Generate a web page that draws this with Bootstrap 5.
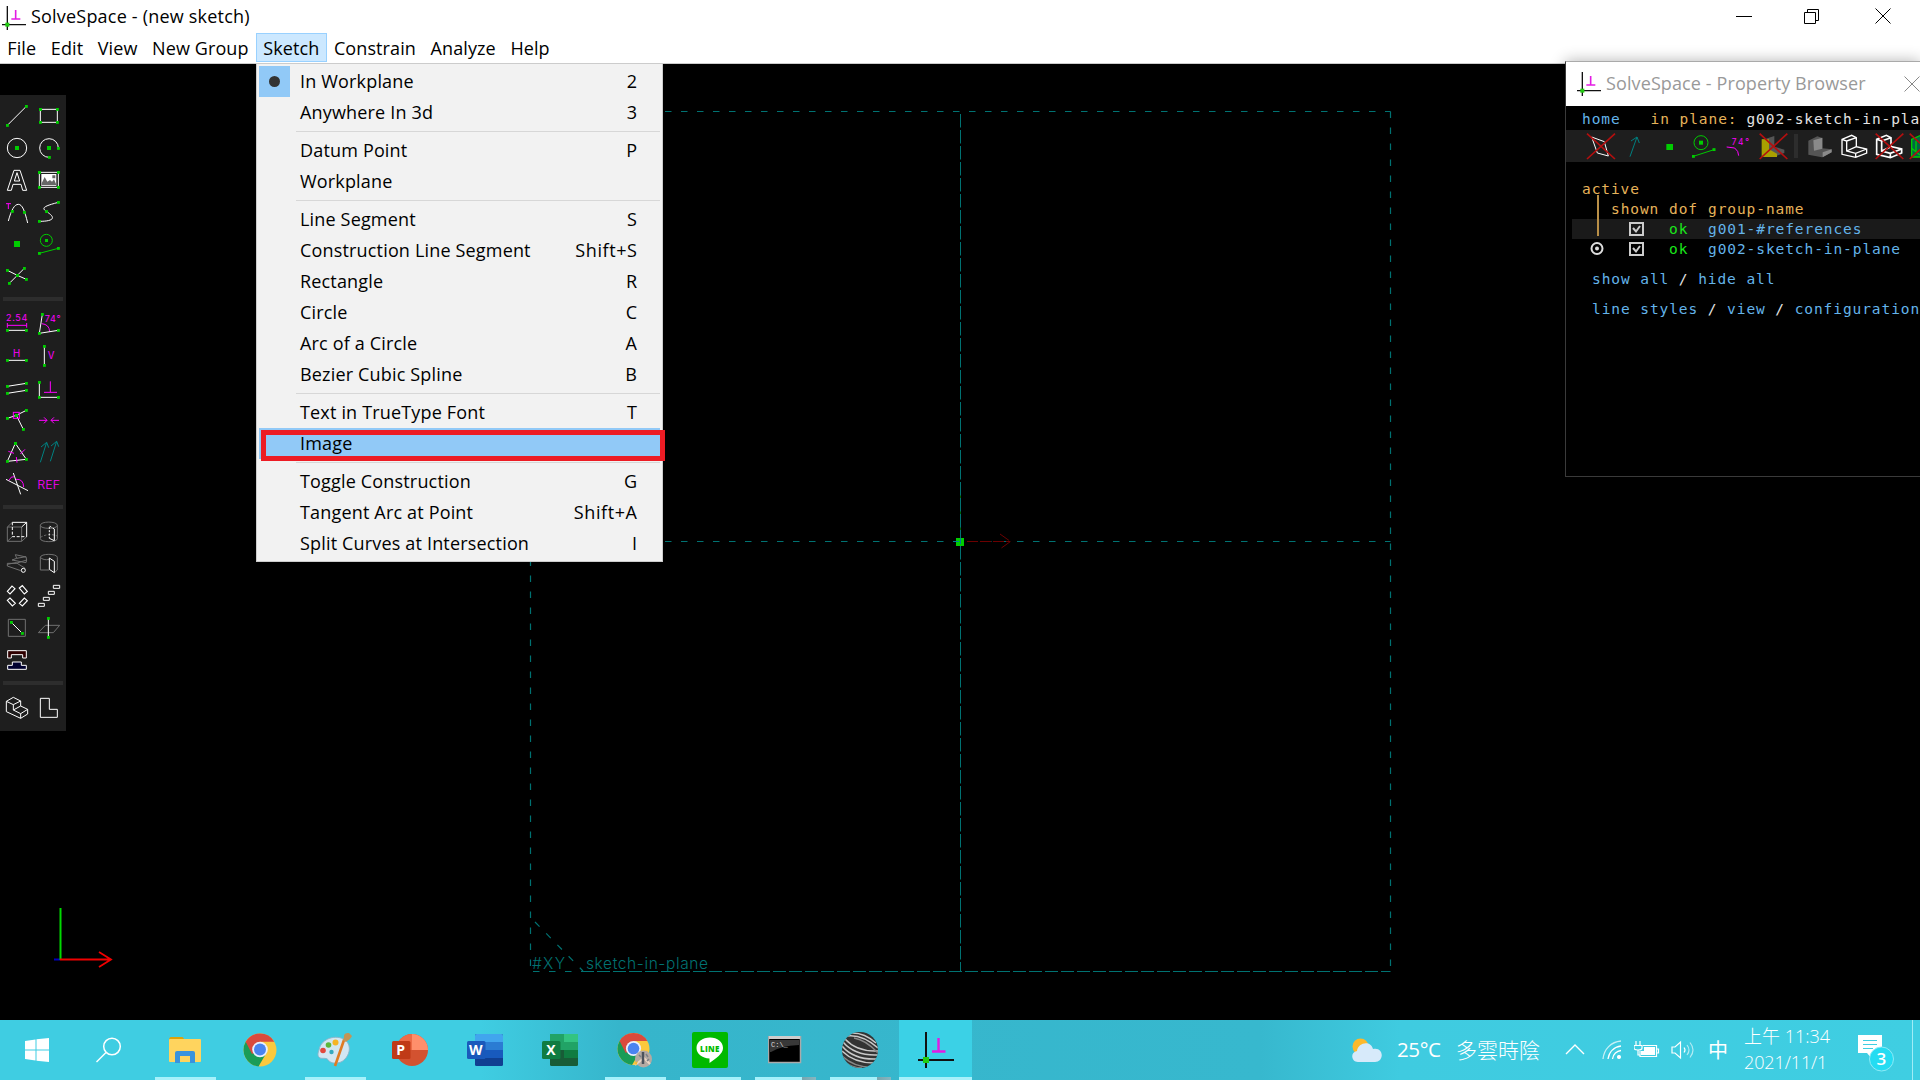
<!DOCTYPE html>
<html lang="zh-Hant">
<head>
<meta charset="utf-8">
<title>SolveSpace - (new sketch)</title>
<link href="https://cdn.jsdelivr.net/npm/bootstrap@5.3.0/dist/css/bootstrap.min.css" rel="stylesheet">
<style>
  body { width: 1920px; height: 1080px; font-family: "Open Sans", "Noto Sans CJK TC", sans-serif; font-size: 18px; color: #000; background: #000; line-height: 1; }
  svg { display: block; flex: none; }
  .title-row { height: 32px; padding-left: 2px; }
  .title-row .caption { letter-spacing: .2px; margin-left: 5px; }
  .pb-title .caption { letter-spacing: .11px; margin: 0 0 2px 5px; }
  .menu-row { height: 32px; border-bottom: 1px solid #ccc; }
  .menu-row span { height: 29px; line-height: 28px; padding: 0 6.3px; letter-spacing: .1px; border: 1px solid transparent; white-space: nowrap; }
  .menu-row .opened { background: #cce8ff; border-color: #99d1ff; }
  .win-controls { gap: 55px; padding-right: 29px; }
  .win-controls svg:first-child { margin-right: -3px; }
  .stage { height: 956px; }
  .drawing { left: 0; top: 0; }
  .toolbox { width: 66px; height: 636px; top: 31px; padding: 5px 1px 0; background: #1e1e1e; z-index: 1; }
  .toolbox svg { width: 32px; height: 32px; }
  .toolbox .rule { width: 60px; height: 4px; margin: 5px 2px 7px; background: #2d2d2d; }
  .w { stroke: #fff; } .g { stroke: #00cc00; } .gr { stroke: #707070; } .m { stroke: #f0f; } .t { stroke: #008080; }
  .toolbox svg, .pb-tools svg { fill: none; stroke-width: 3; }
  .toolbox text, .pb-tools text { fill: #f0f; font-family: Inter, sans-serif; }
  .dots { marker-start: url(#pt); marker-mid: url(#pt); marker-end: url(#pt); }
  .drop { left: 256px; top: 63px; width: 407px; height: 499px; padding: 2px; background: #f2f2f2; border: 1px solid #ccc; z-index: 3; }
  .drop .entry { height: 31px; line-height: 31px; padding-right: 23px; white-space: nowrap; letter-spacing: .17px; }
  .drop .entry .ms-auto { letter-spacing: .6px; margin-right: -.6px; }
  .drop .tick { width: 31px; height: 31px; margin-right: 10px; }
  .drop .tick.on { background: #91c9f7; }
  .drop .tick i { width: 11px; height: 11px; border-radius: 50%; background: #333; }
  .drop .split { height: 1px; margin: 3px 0 3px 37px; background: #d7d7d7; }
  .drop .hot { background: #91c9f7; }
  .frame-red { left: 261px; top: 430px; width: 404px; height: 31px; border: 5px solid #ed1c24; z-index: 4; }
  .prop { left: 1565px; top: 61px; width: 355px; height: 416px; border: 1px solid #aaa; border-width: 1px 0 1px 1px; border-left-color: #3a3a3a; border-bottom-color: #3a3a3a; background: #000; z-index: 2; overflow: hidden; box-shadow: 0 0 14px rgba(0,0,0,.3); }
  .pb-title { height: 44px; background: #fff; color: #999; padding-left: 11px; }
  .mono { font-family: "DejaVu Sans Mono", monospace; font-size: 14.5px; letter-spacing: .92px; white-space: pre; line-height: 20px; }
  .b { color: #64b4ea; } .o { color: #e6b35a; } .k { color: #1ae61a; } .c { color: #e4e4e4; }
  .pb-head { height: 24px; line-height: 26px; padding-left: 16px; }
  .pb-tools { height: 32px; background: #1e1e1e; padding-left: 18px; }
  .pb-tools svg { width: 34.33px; height: 32px; }
  .pb-tools .bar { width: 4px; height: 24px; margin: 4px 5px 0 4px; background: #2d2d2d; flex: none; }
  .x { stroke: #b40f0f; stroke-width: 5; }
  .grid-row { height: 20px; margin-left: 6px; }
  .grid-row.alt { background: #1a1a1a; }
  .c-act { width: 39px; padding-left: 18px; } .c-shown { width: 58px; padding-left: 18px; } .c-dof { width: 39px; }
  .c-act svg, .c-shown svg { margin-top: 3px; }
  .ln-active { padding: 17px 0 0 16px; } .ln-cols { padding-left: 45px; } .ln-links { padding: 10px 0 0 26px; }
  .stem { left: 1597px; top: 195px; width: 1.5px; height: 41px; background: #b98f47; z-index: 3; }
  .taskbar { height: 60px; color: #fff; background: linear-gradient(90deg, #3fcde2 0, #3fcde2 480px, #36b5cb 620px, #37b8ce 1260px, #3fcbe0 1400px, #3fcee2 100%); }
  .tb { width: 75px; height: 60px; position: relative; flex: none; display: flex; align-items: center; justify-content: center; }
  .tb.first { width: 73px; } .tb.find { width: 74px; } .tb.find svg { margin-right: 3px; }
  .tb.run { background: linear-gradient(#a6f1fb, #a6f1fb) 8px 57px / 61px 3px no-repeat; }
  .tb.stack { background: linear-gradient(90deg, #a6f1fb 47px, #78a5ae 47px, #86b7c1 100%) 8px 57px / 61px 3px no-repeat; }
  .tb.cur { width: 73px; margin-left: 2px; background: linear-gradient(#a6f1fb, #a6f1fb) 0 57px / 100% 3px no-repeat #3bd1e6; }
  .tray { margin-left: auto; width: 569px; }
  .tray .temp { width: 59px; font-size: 20.5px; letter-spacing: -.4px; margin: -2px 0 0 14px; }
  .tray .sky { width: 109px; margin-top: -2px; font: 300 21px "Noto Sans CJK TC", sans-serif; }
  .tray .zh { font: 20px "Noto Sans CJK TC", sans-serif; width: 36px; margin-top: -2px; }
  .clock { font: 300 18px/26px "Open Sans", "Noto Sans CJK TC", sans-serif; width: 114px; margin-top: -2px; white-space: nowrap; }
  .clock .day { letter-spacing: -.1px; }
  .note { margin-top: 8px; }
  .edge { width: 1px; height: 60px; background: #a0ecf6; }
</style>
<script src="https://cdn.jsdelivr.net/npm/bootstrap@5.3.0/dist/js/bootstrap.bundle.min.js"></script>
</head>
<body class="position-relative overflow-hidden d-flex flex-column">
<svg width="0" height="0" class="position-absolute">
  <defs>
    <marker id="pt" markerUnits="userSpaceOnUse" markerWidth="10" markerHeight="10" refX="5" refY="5"><rect x=".5" y=".5" width="9" height="9" fill="#00cc00"/></marker>
    <symbol id="logo" viewBox="0 0 36 36"><path d="M8 0V36M0 28H36" stroke="#111" stroke-width="2"/><path d="M20.500 6V19M14 19.500H27.500" stroke="#e31be3" stroke-width="2.400"/><rect x="5" y="25" width="6" height="6" fill="#22cc11"/></symbol>
    <symbol id="chrome" viewBox="0 0 34 34"><circle cx="17" cy="17" r="16.500" fill="#fbc93d"/><path d="M17 17L2.700 8.800A16.500 16.500 0 0 0 15.500 33.400L24 19Z" fill="#1a9c57"/><path d="M17 17L9 21L2.700 8.800A16.500 16.500 0 0 1 31.300 8.800H17Z" fill="#da4a3d"/><circle cx="17" cy="16.500" r="7.800" fill="#eaf0ff"/><circle cx="17" cy="16.500" r="6" fill="#4a84f0"/></symbol>
  </defs>
</svg>

<header class="bg-white">
  <div class="title-row d-flex align-items-center">
    <svg width="24" height="24" class="mt-1"><use href="#logo"/></svg>
    <span class="caption">SolveSpace - (new sketch)</span>
    <div class="win-controls d-flex ms-auto">
      <svg width="16" height="16" stroke="#000"><path d="M0 8.500H16"/></svg>
      <svg width="16" height="16" stroke="#000" fill="none"><path d="M.5 4.500H11.500V15.500H.5ZM3.500 4.500V1.500H14.500V12.500H11.500"/></svg>
      <svg width="16" height="16" stroke="#000"><path d="M.5 .5L15.500 15.500M15.500 .5L.5 15.500"/></svg>
    </div>
  </div>
  <nav class="menu-row d-flex align-items-center">
    <span>File</span><span>Edit</span><span>View</span><span>New Group</span><span class="opened">Sketch</span><span>Constrain</span><span>Analyze</span><span>Help</span>
  </nav>
</header>

<main class="stage position-relative">
  <svg class="drawing position-absolute" width="1920" height="956" viewBox="0 64 1920 956" fill="none">
    <g stroke="#007272" stroke-width="1.200">
      <path d="M530.500 111.500V971.500" stroke-dasharray="6.500 9.500"/>
      <path d="M1390.500 111.500V971.500" stroke-dasharray="6.500 9.500"/>
      <path d="M537 111.500H1390.500" stroke-dasharray="6.500 9.500"/>
      <path d="M533 971.500H581" stroke-dasharray="6.500 9.500"/>
      <path d="M581 971.500H1390.500" stroke-dasharray="13 3"/>
      <path d="M537 541.500H1390.500" stroke-dasharray="6.500 9.500"/>
      <path d="M535 922L583 971" stroke-dasharray="6.500 9.500"/>
    </g>
    <path d="M960.500 541V491" stroke="#006000"/>
    <path d="M960.500 114V971.500" stroke="#007272" stroke-dasharray="13.500 2.500"/>
    <path d="M967 541.500H1010M1000 534L1010.500 541.500L1000 549" stroke="#6c0000" stroke-dasharray="11 2"/>
    <rect x="956" y="538" width="8" height="8" fill="#00cc00"/>
    <path d="M960.500 538V544M953 541.500H959" stroke="#007b9b"/>
    <path d="M54 959.500H60" stroke="#0000c0" stroke-width="2"/>
    <path d="M60.500 960V908" stroke="#00d800" stroke-width="2"/>
    <path d="M60 959.500H111M99 952L111 959.500L99 967" stroke="#f00000" stroke-width="1.800"/>
    <g fill="#007272" font-family="Inter, sans-serif" font-size="15.500" font-weight="300">
      <text x="532" y="969" textLength="33">#XY</text>
      <text x="586" y="969" textLength="122">sketch-in-plane</text>
    </g>
  </svg>

  <aside class="toolbox position-relative d-flex flex-wrap align-content-start">
    <svg viewBox="3 30 96 96"><path class="w dots" d="M22 106L79 49"/></svg>
    <svg viewBox="99 30 96 96"><path class="w dots" d="M121 58H172V97H121V58"/></svg>
    <svg viewBox="3 126 96 96"><circle class="w" cx="51" cy="174" r="29"/><rect x="45" y="168" width="12" height="12" fill="#0c0"/></svg>
    <svg viewBox="99 126 96 96"><path class="w dots" d="M175 175A28 28 0 1 0 148 202"/><rect x="141" y="168" width="12" height="12" fill="#0c0"/></svg>
    <svg viewBox="3 222 96 96"><path class="w" d="M22 301L42 241H60L80 301H68L63 283H39L34 301ZM43 273L51 248L59 273Z"/></svg>
    <svg viewBox="99 222 96 96"><path class="w dots" d="M118 247H175V292H118V247"/><rect x="124" y="252" width="45" height="36" fill="#fff"/><path d="M125 286V280L134 261L142 275L150 270L156 275L162 268L168 282V286ZM157 256H166V265H157Z" fill="#666"/></svg>
    <svg viewBox="3 318 96 96"><path class="w" d="M25 393C34 360 43 343 55 343C67 343 74 362 83 399"/><path class="dots" d="M37 364L73 367"/><path class="m" d="M18 341H33M25 341V357"/></svg>
    <svg viewBox="99 318 96 96"><path class="w dots" d="M175 337C125 350 126 355 140 365C170 384 160 394 118 394"/></svg>
    <svg viewBox="3 414 96 96"><rect x="42" y="453" width="18" height="18" fill="#0c0"/></svg>
    <svg viewBox="99 414 96 96"><circle class="g" cx="139" cy="451" r="18"/><rect x="135" y="447" width="9" height="9" fill="#0c0"/><path class="g dots" d="M118 490L175 475"/></svg>
    <svg viewBox="3 510 96 96"><path class="w dots" d="M22 541L52 556L79 568"/><path class="w dots" d="M28 580L52 556L73 535"/></svg>
    <svg viewBox="99 510 96 96"></svg>
    <div class="rule"></div>
    <svg viewBox="3 54 96 96"><text x="18" y="92" font-size="27" textLength="64">2.54</text><path class="m" d="M22 106H80M22 99V113M80 99V113"/><path class="w dots" d="M22 121H79"/></svg>
    <svg viewBox="99 54 96 96"><text x="134" y="96" font-size="27" textLength="48">74°</text><path class="m" d="M125 101Q148 103 149 125"/><path class="w dots" d="M127 73L118 130L175 121"/></svg>
    <svg viewBox="3 150 96 96"><text x="39" y="200" font-size="29">H</text><path class="w dots" d="M22 211H79"/></svg>
    <svg viewBox="99 150 96 96"><path class="w dots" d="M133 169V226"/><text x="143" y="208" font-size="29">V</text></svg>
    <svg viewBox="3 246 96 96"><path class="w dots" d="M22 289L79 280"/><path class="w dots" d="M22 310L79 301"/></svg>
    <svg viewBox="99 246 96 96"><path class="w dots" d="M118 277V322H175"/><path class="m" d="M151 274V307M132 307H171"/></svg>
    <svg viewBox="3 342 96 96"><path class="w dots" d="M22 385L49 376L79 361"/><path class="w dots" d="M49 376L70 418"/><rect class="m" x="40" y="367" width="18" height="18"/></svg>
    <svg viewBox="99 342 96 96"><path class="m" d="M117 391H141M132 382L141 391L132 400M177 391H153M162 382L153 391L162 400"/></svg>
    <svg viewBox="3 438 96 96"><path class="w dots" d="M46 460L22 514L79 508L46 460"/><path class="m" d="M25 484L42 490M61 492L75 478M49 501L51 518"/></svg>
    <svg viewBox="99 438 96 96"><path class="t" d="M121 517L140 457M123 471L140 457L146 473M151 514L170 454M153 468L170 454L176 470"/></svg>
    <svg viewBox="3 534 96 96"><path class="w" d="M18 568L84 602M40 549L62 613"/><path class="m" d="M27 571Q32 558 43 560M48 568Q70 566 71 591"/></svg>
    <svg viewBox="99 534 96 96"><text x="112" y="597" font-size="34" font-weight="300" textLength="68" lengthAdjust="spacingAndGlyphs">REF</text></svg>
    <div class="rule"></div>
    <svg viewBox="3 48 96 96"><path class="gr" d="M22 81H65V124H22ZM22 81L37 67M65 124L80 110M22 124L37 110"/><path class="w" d="M37 67H80V110M65 81L80 67"/><path class="w" stroke-dasharray="9 5" d="M37 67V110H80"/></svg>
    <svg viewBox="99 48 96 96"><path class="gr" d="M121 76C121 63 172 63 172 76V116C172 128 121 128 121 116ZM121 76C121 88 172 88 172 76"/><path class="gr" stroke-dasharray="7 5" d="M121 112Q146 98 172 108"/><path class="w" d="M163 87V122L148 115"/><path class="w" stroke-dasharray="6 4" d="M163 87L148 78V115"/></svg>
    <svg viewBox="3 144 96 96"><path class="gr" d="M46 164L50 175L78 170L80 180L48 190H22V198L62 212M46 164L78 171M50 175L36 180L78 188L80 180M22 193L48 188L76 205"/><circle class="w" cx="70" cy="211" r="6"/></svg>
    <svg viewBox="99 144 96 96"><path class="gr" d="M121 172C121 160 172 160 172 172V210L163 218M121 172V210H148M121 172Q130 182 148 178"/><path class="w" d="M148 174L163 184V218L148 208Z"/></svg>
    <svg viewBox="3 240 96 96"><path class="w" stroke-width="3.500" d="M22 274L36 258L45 266L30 282ZM58 264L67 257L82 274L73 282ZM22 301L30 294L46 310L37 318ZM58 310L73 294L82 302L67 318Z"/></svg>
    <svg viewBox="99 240 96 96"><path class="w" d="M115 310H133V319H115ZM130 292H148V301H130ZM145 274H163V283H145ZM160 256H179V265H160Z"/></svg>
    <svg viewBox="3 336 96 96"><path class="gr" d="M25 358H76V409H25Z"/><path class="w dots" d="M34 367L67 400"/></svg>
    <svg viewBox="99 336 96 96"><path class="gr" d="M115 398L136 376H179L160 398Z"/><path class="w dots" d="M145 355V412"/></svg>
    <svg viewBox="3 432 96 96"><path class="w" fill="#300000" d="M23 452H79V474H68V464H34V474H23Z"/><path class="w" fill="#000030" d="M37 486H64V496H79V508H23V496H37Z"/></svg>
    <svg viewBox="99 432 96 96"></svg>
    <div class="rule"></div>
    <svg viewBox="3 576 96 96"><path class="w" d="M19 604L40 592L62 603V618L83 628V642L62 655L19 635ZM19 604L40 614L62 603M40 614V630L62 641V655M40 630L62 618M62 641L83 628"/></svg>
    <svg viewBox="99 576 96 96"><path class="w" d="M121 595H148V628H172V652H121Z"/></svg>
  </aside>
</main>

<section class="drop position-absolute">
  <div class="entry d-flex"><div class="tick on d-flex align-items-center justify-content-center"><i></i></div><span>In Workplane</span><span class="ms-auto">2</span></div>
  <div class="entry d-flex"><div class="tick"></div><span>Anywhere In 3d</span><span class="ms-auto">3</span></div>
  <div class="split"></div>
  <div class="entry d-flex"><div class="tick"></div><span>Datum Point</span><span class="ms-auto">P</span></div>
  <div class="entry d-flex"><div class="tick"></div><span>Workplane</span></div>
  <div class="split"></div>
  <div class="entry d-flex"><div class="tick"></div><span>Line Segment</span><span class="ms-auto">S</span></div>
  <div class="entry d-flex"><div class="tick"></div><span>Construction Line Segment</span><span class="ms-auto">Shift+S</span></div>
  <div class="entry d-flex"><div class="tick"></div><span>Rectangle</span><span class="ms-auto">R</span></div>
  <div class="entry d-flex"><div class="tick"></div><span>Circle</span><span class="ms-auto">C</span></div>
  <div class="entry d-flex"><div class="tick"></div><span>Arc of a Circle</span><span class="ms-auto">A</span></div>
  <div class="entry d-flex"><div class="tick"></div><span>Bezier Cubic Spline</span><span class="ms-auto">B</span></div>
  <div class="split"></div>
  <div class="entry d-flex"><div class="tick"></div><span>Text in TrueType Font</span><span class="ms-auto">T</span></div>
  <div class="entry d-flex hot"><div class="tick"></div><span>Image</span></div>
  <div class="split"></div>
  <div class="entry d-flex"><div class="tick"></div><span>Toggle Construction</span><span class="ms-auto">G</span></div>
  <div class="entry d-flex"><div class="tick"></div><span>Tangent Arc at Point</span><span class="ms-auto">Shift+A</span></div>
  <div class="entry d-flex"><div class="tick"></div><span>Split Curves at Intersection</span><span class="ms-auto">I</span></div>
</section>
<div class="frame-red position-absolute"></div>

<section class="prop position-absolute">
  <div class="pb-title d-flex align-items-center">
    <svg width="24" height="24"><use href="#logo"/></svg><span class="caption">SolveSpace - Property Browser</span>
    <svg width="16" height="16" stroke="#888" class="ms-auto"><path d="M.5 .5L15.500 15.500M15.500 .5L.5 15.500"/></svg>
  </div>
  <div class="pb-head mono d-flex"><span class="b">home</span><span class="o" style="margin-left:30px">in plane:</span><span class="c" style="margin-left:9px">g002-sketch-in-plane</span></div>
  <div class="pb-tools d-flex">
    <svg viewBox="72 225 103 96"><path class="w" d="M95 246L133 260L145 303L112 294Z"/><path class="x" d="M81 236L165 312M165 236L81 312"/></svg>
    <svg viewBox="175 225 103 96"><path class="t" d="M211 305L232 246M214 258L232 246L239 264"/></svg>
    <svg viewBox="278 225 103 96"><rect x="318" y="267" width="20" height="18" fill="#0c0"/></svg>
    <svg viewBox="381 225 103 96"><circle class="g" cx="423" cy="263" r="21"/><rect x="417" y="257" width="12" height="12" fill="#0c0"/><path class="g dots" d="M400 304L462 284"/></svg>
    <svg viewBox="484 225 103 96"><text x="516" y="271" font-size="25" textLength="52">74°</text><path class="m" d="M501 276L525 279Q537 288 537 302"/></svg>
    <svg viewBox="587 225 103 96"><path fill="#555" d="M612 253L642 243V275L672 284V294L640 306H605V253Z"/><path fill="#a8a000" d="M604 253H626V283L650 296V306H604Z"/><path class="x" d="M598 236L681 312M681 236L598 312"/></svg>
    <div class="bar"></div>
    <svg viewBox="729 225 103 96"><path fill="#555" d="M745 257L772 244L787 249V280L815 283V292L786 307L745 299Z"/><path fill="#8a8a8a" d="M760 256L787 248V281L762 287ZM788 292L815 283V292L788 307Z"/></svg>
    <svg viewBox="832 225 103 96"><path class="w" stroke-width="4" d="M847 253L876 241L890 248V275L921 282V294L888 307L847 298ZM847 253L861 258V288L888 295L921 282M861 258L890 248M861 288L890 275M888 295V307"/></svg>
    <svg viewBox="935 225 103 96"><path class="w" stroke-width="5" d="M949 253L978 241L992 248V275L1024 282V294L990 308L949 298ZM949 253L964 258V288L990 295L1024 282M964 258L992 248M964 288L992 275M990 295V308"/><path class="x" d="M946 236L1029 312M1029 236L946 312"/></svg>
    <svg viewBox="1038 225 103 96"><path class="g" fill="#064" stroke-width="4" d="M1055 253L1082 241L1096 248V275L1126 282V306H1055ZM1068 258V290M1055 280L1080 300"/><path class="x" d="M1049 236L1132 312M1132 236L1049 312"/></svg>
  </div>
  <div class="mono o ln-active">active</div>
  <div class="mono o d-flex ln-cols"><span style="width:58px">shown</span><span class="c-dof">dof</span><span>group-name</span></div>
  <div class="grid-row alt mono d-flex"><div class="c-act"></div><div class="c-shown"><svg width="15" height="15" fill="none" stroke="#ccc" stroke-width="2"><path d="M1 1H14V13H1ZM4 6L7 9.500L11 4"/></svg></div><span class="c-dof k">ok</span><span class="b">g001-#references</span></div>
  <div class="grid-row mono d-flex"><div class="c-act"><svg width="14" height="14" fill="none" stroke="#ddd" stroke-width="2"><circle cx="7" cy="6.500" r="5.500"/><circle cx="7" cy="6.500" r="1"/></svg></div><div class="c-shown"><svg width="15" height="15" fill="none" stroke="#ccc" stroke-width="2"><path d="M1 1H14V13H1ZM4 6L7 9.500L11 4"/></svg></div><span class="c-dof k">ok</span><span class="b">g002-sketch-in-plane</span></div>
  <div class="mono c ln-links"><span class="b">show all</span> / <span class="b">hide all</span></div>
  <div class="mono c ln-links"><span class="b">line styles</span> / <span class="b">view</span> / <span class="b">configuration</span></div>
</section>
<div class="stem position-absolute"></div>

<footer class="taskbar d-flex align-items-center">
  <div class="tb first"><svg width="24" height="24" fill="#fff"><path d="M0 3L10.500 1.500V11.500H0ZM11.500 1.300L24 0V11.500H11.500ZM0 12.500H10.500V22.500L0 21ZM11.500 12.500H24V24L11.500 22.700Z"/></svg></div>
  <div class="tb find"><svg width="26" height="26" fill="none" stroke="#fff" stroke-width="1.500"><circle cx="16" cy="9.500" r="8.300"/><path d="M10 15.500L.5 25"/></svg></div>
  <div class="tb run"><svg width="32" height="28"><path d="M0 5Q0 1 2 1H13Q15 1 15 5Z" fill="#dca20a"/><rect y="3" width="32" height="23" rx="1" fill="#ffd45e"/><path d="M6 27V17Q6 15 8 15H24Q26 15 26 17V27H21V20H11V27Z" fill="#3a93dd"/></svg></div>
  <div class="tb"><svg width="34" height="34"><use href="#chrome"/></svg></div>
  <div class="tb run"><svg width="36" height="36"><path d="M2 18C4 6 20 2 28 8C36 14 32 26 24 30C19 32 14 31 12 29C10 25 6 27 3 26C0 24 1 21 2 18Z" fill="#d3e6f2" stroke="#8db7cb"/><circle cx="14.500" cy="20" r="2.200" fill="#35a9c0"/><circle cx="6" cy="18.500" r="2.800" fill="#e2483d"/><circle cx="11.500" cy="13" r="2.800" fill="#5cb83a"/><circle cx="18.500" cy="10.500" r="3" fill="#f6b426"/><path d="M18 34L27 8" stroke="#e07b23" stroke-width="2.600"/><path d="M25.500 8C29 6 24 1 32 1L35 4C33 8 31 8 29 10Z" fill="#c39556"/></svg></div>
  <div class="tb"><svg width="36" height="34"><circle cx="20" cy="17" r="16" fill="#d35230"/><path d="M20 1A16 16 0 0 1 36 17H20Z" fill="#ff8f6b"/><path d="M4 17A16 16 0 0 1 20 1V17Z" fill="#ed6c47"/><rect y="8" width="18.500" height="18" rx="1.500" fill="#c03a17"/><text x="4.300" y="22" fill="#fff" font-size="14" font-weight="700">P</text></svg></div>
  <div class="tb"><svg width="36" height="34"><rect x="8" y="1" width="28" height="32" rx="1.500" fill="#103f91"/><path d="M8 2.500Q8 1 9.500 1H34.500Q36 1 36 2.500V9H8Z" fill="#41a5ee"/><path d="M8 9H36V17H8Z" fill="#2b7cd3"/><path d="M8 17H36V25H8Z" fill="#185abd"/><rect y="8" width="18.500" height="18" rx="1.500" fill="#1a59bb"/><text x="2" y="22" fill="#fff" font-size="14" font-weight="700">W</text></svg></div>
  <div class="tb"><svg width="36" height="34"><rect x="8" y="1" width="28" height="32" rx="1.500" fill="#185c37"/><path d="M8 1H22V17H8Z" fill="#21a366"/><path d="M22 1H36V9H22Z" fill="#33c481"/><path d="M22 9H36V17H22Z" fill="#21a366"/><path d="M22 17H36V25H22Z" fill="#107c41"/><rect y="8" width="18.500" height="18" rx="1.500" fill="#107c41"/><text x="4.300" y="22" fill="#fff" font-size="14" font-weight="700">X</text></svg></div>
  <div class="tb run"><svg width="36" height="36" viewBox="0 0 36 36"><use href="#chrome" x="0" y="0" width="33" height="34"/><circle cx="26.500" cy="27" r="8.500" fill="#b4aaa2"/><path d="M18 33L27 26L33 32" stroke="#ead6c5" stroke-width="2" fill="none"/><path d="M18 31L21 29L19 34Z" fill="#f5b725"/><path d="M26 20V32" stroke="#4c535c" stroke-width="2.500"/><path d="M22 23L24 25M29 22L31 25M30 29L32 27" stroke="#7a7f86" stroke-width="1.500"/></svg></div>
  <div class="tb run"><svg width="36" height="36"><rect width="36" height="36" rx="2" fill="#00b900"/><path d="M18 5.500C25.500 5.500 31 10 31 16C31 22 24 26 17.500 31V26.500C10 26 4.500 22 4.500 16C4.500 10 10.500 5.500 18 5.500Z" fill="#fff"/><text x="8" y="19.500" font-size="8" font-weight="800" fill="#00b900" textLength="19.500">LINE</text></svg></div>
  <div class="tb stack"><svg width="34" height="28"><rect x=".5" y=".5" width="32" height="26" fill="#000" stroke="#aaa" stroke-width="1.500"/><path d="M1 1.500H32" stroke="#ccc" stroke-width="3"/><path d="M2 4H31V9Q12 10 3 16H2Z" fill="#383838"/><text x="3" y="11" font-size="7" fill="#ddd" font-family="Liberation Mono, monospace">C:\_</text></svg></div>
  <div class="tb stack"><svg width="36" height="36"><clipPath id="ball"><circle cx="18" cy="18" r="18"/></clipPath><g clip-path="url(#ball)" fill="none" stroke="#c8c8c8" stroke-width="1.500"><rect width="36" height="36" fill="#333" stroke="none"/><path d="M8 1Q22 0 34 11M5 4Q20 2 36 16M3 7Q15 20 36 19M1 10Q13 24 36 23M0 14Q12 28 35 27M0 19Q12 31 32 31"/><path d="M0 24Q12 35 28 35M3 30Q10 36 20 36M12 6Q24 8 36 21" stroke="#888"/></g></svg></div>
  <div class="tb cur"><svg width="36" height="36"><use href="#logo"/></svg></div>

  <div class="tray d-flex align-items-center h-100">
    <svg width="32" height="26"><circle cx="9.500" cy="9.500" r="8" fill="#fdb92b"/><path d="M7 25C0 25-1 15 6 14C7 5 20 3 22 12C30 10 33 18 29 23Q27 25 24 25Z" fill="#d7eafa"/></svg>
    <span class="temp">25°C</span><span class="sky">多雲時陰</span>
    <svg width="37" height="20" fill="none" stroke="#fff" stroke-width="1.400"><path d="M1 14L10 5L19 14"/></svg>
    <svg width="32" height="20" fill="none" stroke="#fff" stroke-width="1.300"><path d="M1 19C2 9 9 2 19 1" opacity=".7"/><path d="M6 19C7 12 12 7 19 6M10.500 19C11 14 15 11 19 10.500"/><circle cx="17" cy="17" r="1.400" fill="#fff"/></svg>
    <svg width="37" height="18" fill="none" stroke="#fff" stroke-width="1.200"><path d="M2 0V4M6 0V4M0 4.500H8V7Q8 9 4 9Q0 9 0 7ZM4 9V14H6M9 4.500H22.500V15.500H6V10M23 8H24.500V12H23"/><path d="M10 6H21V14H7V10H10Z" fill="#fff" stroke="none"/></svg>
    <svg width="37" height="20" fill="none" stroke="#fff" stroke-width="1.200"><path d="M1 7H4L9.500 2V18L4 13H1ZM13 7.500Q15 10 13 12.500"/><path d="M16 5Q20 10 16 15M19 2.500Q25 10 19 17.500" opacity=".6"/></svg>
    <span class="zh">中</span>
    <div class="clock"><div>上午 11:34</div><div class="day">2021/11/1</div></div>
    <svg width="54" height="40" class="note"><path d="M0 1H24V19H14V25L9 19H0Z" fill="#fff"/><path d="M5 6.500H19M5 10.500H19M5 14.500H15" stroke="#3fcee2" stroke-width="1.200"/><circle cx="23.500" cy="25" r="12" fill="#24dcf2" stroke="#8eeaf6"/><text x="18.500" y="31" font-size="17" fill="#fff" font-weight="600">3</text></svg>
    <div class="edge"></div>
  </div>
</footer>
</body>
</html>
